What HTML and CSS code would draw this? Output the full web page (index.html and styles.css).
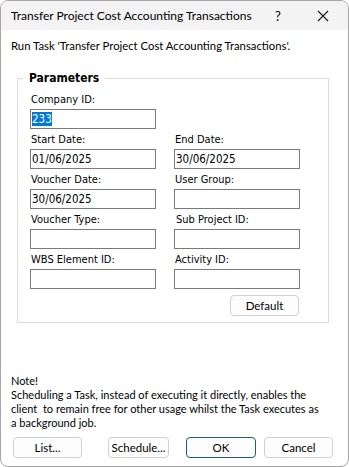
FILE: index.html
```html
<!DOCTYPE html>
<html>
<head>
<meta charset="utf-8">
<link rel="stylesheet" href="styles.css">
</head>
<body>
<div class="window">
  <div class="titlebar">
    <span class="title">Transfer Project Cost Accounting Transactions</span>
    <span class="help">?</span>
    <span class="close"><svg width="12" height="12" viewBox="0 0 12 12"><path d="M1 1L11 11M11 1L1 11" stroke="#1a1a1a" stroke-width="1.1" fill="none"/></svg></span>
  </div>
  <div class="content">
    <div class="intro">Run Task 'Transfer Project Cost Accounting Transactions'.</div>
    <fieldset class="group">
      <legend class="legend">Parameters</legend>
      <div class="grid">
        <div class="field">
          <div class="label">Company ID:</div>
          <div class="input"><span class="sel">233</span></div>
        </div>
        <div class="field"></div>
        <div class="field">
          <div class="label">Start Date:</div>
          <div class="input">01/06/2025</div>
        </div>
        <div class="field">
          <div class="label">End Date:</div>
          <div class="input">30/06/2025</div>
        </div>
        <div class="field">
          <div class="label">Voucher Date:</div>
          <div class="input">30/06/2025</div>
        </div>
        <div class="field">
          <div class="label">User Group:</div>
          <div class="input"></div>
        </div>
        <div class="field">
          <div class="label">Voucher Type:</div>
          <div class="input"></div>
        </div>
        <div class="field">
          <div class="label indent">Sub Project ID:</div>
          <div class="input"></div>
        </div>
        <div class="field">
          <div class="label">WBS Element ID:</div>
          <div class="input"></div>
        </div>
        <div class="field">
          <div class="label">Activity ID:</div>
          <div class="input"></div>
        </div>
      </div>
      <div class="default-row"><button class="btn default">Default</button></div>
    </fieldset>
    <div class="note">
      <div>Note!</div>
      <div>Scheduling a Task, instead of executing it directly, enables the<br>client&nbsp; to remain free for other usage whilst the Task executes as<br>a background job.</div>
    </div>
    <div class="buttons">
      <button class="btn b-list">List...</button>
      <button class="btn b-schedule">Schedule...</button>
      <button class="btn b-ok">OK</button>
      <button class="btn b-cancel">Cancel</button>
    </div>
  </div>
</div>
</body>
</html>
```
FILE: styles.css
```css
html, body {
  margin: 0;
  padding: 0;
  background: #ffffff;
}
.window {
  width: 349px;
  height: 467px;
  box-sizing: border-box;
  border: 1px solid #a6a6a6;
  border-radius: 8px;
  overflow: hidden;
  background: #ffffff;
  font-family: "Lato", "Noto Sans", sans-serif;
  font-size: 11px;
  color: #000;
  display: flex;
  flex-direction: column;
}
.titlebar {
  height: 29px;
  background: #f3f3f3;
  display: flex;
  align-items: center;
  padding-left: 10px;
  flex-shrink: 0;
}
.title {
  font-size: 12px;
  flex: 1;
}
.help {
  width: 10px;
  font-size: 13px;
  margin-right: 32px;
}
.close {
  width: 12px;
  margin-right: 19px;
  display: flex;
}
.content {
  padding: 0 0 0 10px;
  flex: 1;
  display: flex;
  flex-direction: column;
}
.intro {
  margin-top: 8px;
  line-height: 16px;
  font-size: 11.3px;
}
.group {
  margin: 17px 0 0 6px;
  width: 312px;
  box-sizing: border-box;
  border: 1px solid #dcdcdc;
  padding: 6px 0 6px 12px;
  font-family: "DejaVu Sans Condensed", "DejaVu Sans", sans-serif;
  font-size: 11px;
}
.legend {
  font-weight: bold;
  font-size: 12px;
  padding: 0 6px 0 6px;
  margin-left: -7px;
  line-height: 14px;
}
.grid {
  display: grid;
  grid-template-columns: 126px 126px;
  column-gap: 18px;
}
.field {
  height: 40px;
}
.label {
  height: 18px;
  line-height: 17px;
  padding-left: 1px;
}
.label.indent {
  padding-left: 2px;
}
.input {
  height: 20px;
  box-sizing: border-box;
  border: 1px solid #7a7a7a;
  background: #fff;
  line-height: 18px;
  padding-left: 1px;
  font-size: 11.5px;
}
.sel {
  background: #0078d7;
  color: #fff;
}
.default-row {
  display: flex;
  justify-content: flex-end;
  padding-right: 29px;
  margin-top: 4px;
}
.btn {
  height: 21px;
  box-sizing: border-box;
  border: 1px solid #d0d0d0;
  border-radius: 4px;
  background: #fdfdfd;
  font-family: "Lato", "Noto Sans", sans-serif;
  font-size: 11.5px;
  color: #000;
  padding: 0;
  line-height: 18px;
}
.default {
  width: 69px;
}
.note {
  margin-top: 51px;
  line-height: 14px;
  white-space: nowrap;
}
.buttons {
  display: flex;
  margin-top: 7px;
}
.b-list { width: 69px; margin-left: 2px; }
.b-schedule { width: 61px; margin-left: 26px; }
.b-ok { width: 70px; margin-left: 17px; border-color: #1c5a94; }
.b-cancel { width: 69px; margin-left: 8px; }
```
